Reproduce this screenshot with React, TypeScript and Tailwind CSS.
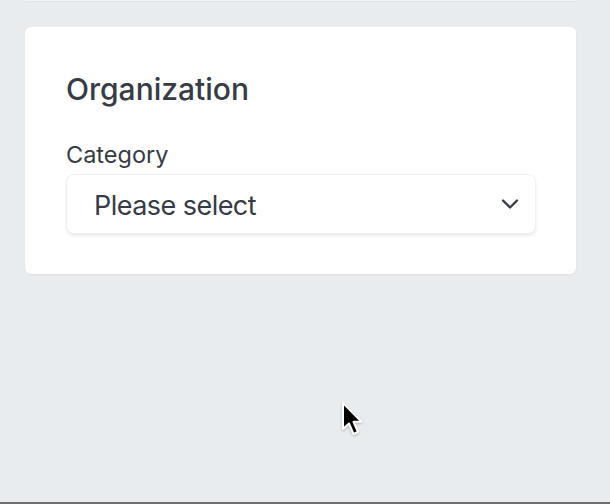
import React from "react";

export default function App() {
  return (
    <div
      className="relative flex h-[504px] w-[610px] flex-col bg-[#e9ecee]"
      style={{ fontFamily: 'Inter, "Noto Sans", sans-serif' }}
    >
      <div className="ml-[25px] mr-[34px] h-[1px] rounded-b-md bg-[#f2f3f4] shadow-[0_1px_1px_rgba(0,0,0,0.04)]" />
      <div className="ml-[25px] mr-[34px] mt-[26px] flex h-[247px] flex-col rounded-md bg-white px-[41px] pt-[44px] shadow-[0_1px_2px_rgba(0,0,0,0.05)]">
        <h2 className="text-[30px] font-medium leading-[36px] text-[#363b45]">
          Organization
        </h2>
        <label className="mt-[34px] text-[23.5px] leading-[28px] text-[#363b45]">
          Category
        </label>
        <div className="mt-[5px] flex h-[60px] w-[470px] items-center justify-between rounded-lg border border-[#eef0f1] bg-white pl-[27px] pr-[16px] shadow-[0_2px_3px_rgba(0,0,0,0.08)]">
          <span className="pt-[3px] text-[27px] leading-[32px] tracking-[-0.02em] text-[#363b45]">
            Please select
          </span>
          <svg width="18" height="12" viewBox="0 0 18 12" fill="none" stroke="#363b45" strokeWidth="2.3" strokeLinecap="round" strokeLinejoin="round">
            <path d="M2 2.5 L9 9.5 L16 2.5" />
          </svg>
        </div>
      </div>
      <div className="flex-1" />
      <div className="h-[2px] bg-[#6e6e6e]" />
      <svg
        className="absolute left-[340px] top-[400px]"
        width="28"
        height="40"
        viewBox="0 0 28 40"
      >
        <path
          d="M3 3 L3 29 L9 23.5 L13.5 34 L18 32 L13.5 21.8 L21.5 21.8 Z"
          fill="#000"
          stroke="#fff"
          strokeWidth="2"
          strokeLinejoin="round"
          style={{ filter: "drop-shadow(0 1px 1px rgba(0,0,0,0.25))" }}
        />
      </svg>
    </div>
  );
}
